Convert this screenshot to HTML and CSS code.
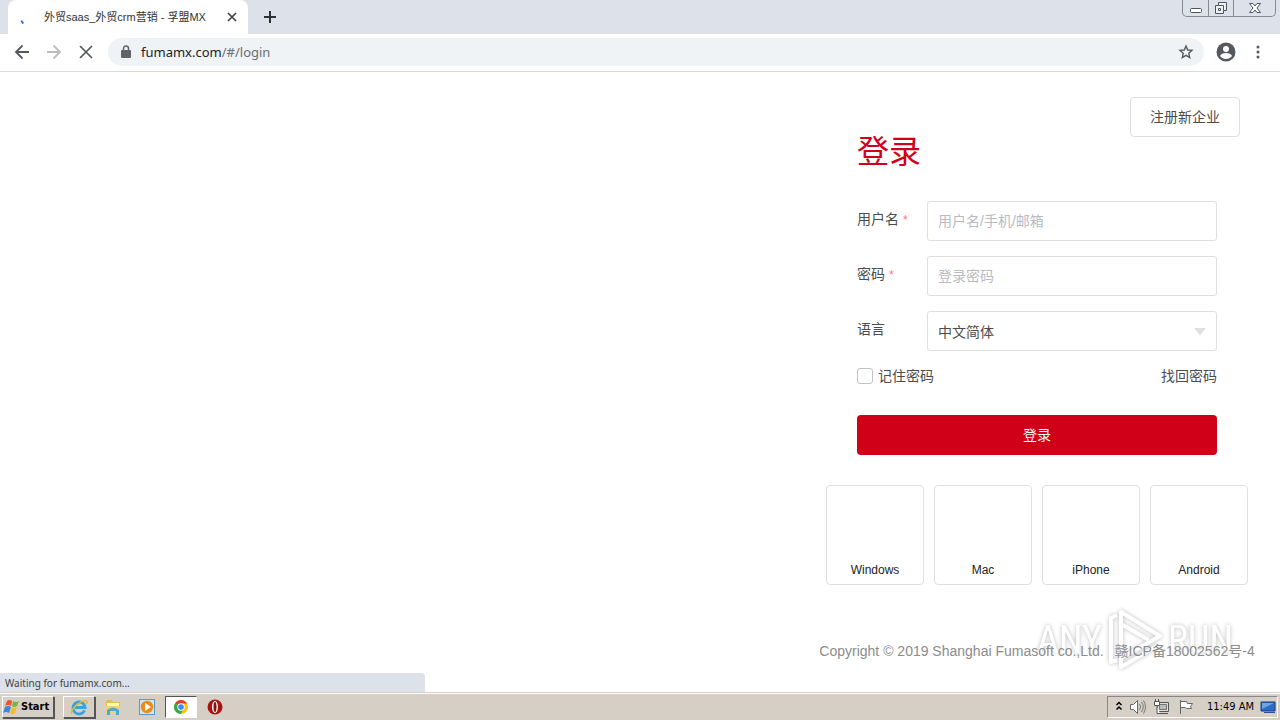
FILE: index.html
```html
<!DOCTYPE html>
<html lang="zh-CN">
<head>
<meta charset="utf-8">
<title>外贸saas_外贸crm营销 - 孚盟MX</title>
<link rel="stylesheet" href="styles.css">
</head>
<body>
<header class="tabstrip">
  <div class="tab">
    <svg class="spinner" width="16" height="16" viewBox="0 0 16 16"><path d="M5.500 6.500q.3 1.800 2 2.800" fill="none" stroke="#3b78d8" stroke-width="2"/></svg>
    <span class="tab-title">外贸saas_外贸crm营销 - 孚盟MX</span>
    <button class="icon-button tab-close" aria-label="Close tab"><svg width="10" height="10" viewBox="0 0 10 10"><path d="M1 1l8 8M9 1L1 9" stroke="#3c4043" stroke-width="1.600"/></svg></button>
  </div>
  <button class="icon-button new-tab" aria-label="New tab"><svg width="14" height="14" viewBox="0 0 14 14"><path d="M7 1v12M1 7h12" stroke="#2d3034" stroke-width="2"/></svg></button>
  <div class="window-controls">
    <button aria-label="Minimize"><svg width="14" height="14" viewBox="0 0 14 14"><rect x="1.500" y="7.500" width="11" height="4" rx="1" fill="#fff" stroke="#50545b"/></svg></button>
    <button aria-label="Restore"><svg width="14" height="14" viewBox="0 0 14 14"><path d="M4.500 1.500h8v8h-3v3h-8v-8h3z" fill="#eef0f3" stroke="#50545b"/><path d="M4.500 4.500h5v5M4.500 7.500h2v2h-2z" fill="none" stroke="#50545b"/></svg></button>
    <button aria-label="Close"><svg width="14" height="12" viewBox="0 0 14 12"><path d="M1.500 1.500h3.500l2 2.500 2-2.500h3.500L9 6l3.500 4.500H9L7 8l-2 2.500H1.500L5 6z" fill="#fff" stroke="#50545b"/></svg></button>
  </div>
</header>
<nav class="toolbar">
  <button class="icon-button" aria-label="Back"><svg width="16" height="16" viewBox="0 0 16 16"><path d="M15 8H2M8.500 1.500L2 8l6.500 6.500" fill="none" stroke="#55585c" stroke-width="1.800"/></svg></button>
  <button class="icon-button" aria-label="Forward"><svg width="16" height="16" viewBox="0 0 16 16"><path d="M1 8h13M7.500 1.500L14 8l-6.500 6.500" fill="none" stroke="#babcbe" stroke-width="1.800"/></svg></button>
  <button class="icon-button" aria-label="Stop"><svg width="16" height="16" viewBox="0 0 16 16"><path d="M2 2l12 12M14 2L2 14" stroke="#55585c" stroke-width="1.700"/></svg></button>
  <div class="omnibox">
    <svg width="10" height="14" viewBox="0 0 10 14"><path d="M2.500 6V3.500a2.500 2.500 0 015 0V6" fill="none" stroke="#5f6368" stroke-width="1.500"/><rect y="5" width="10" height="8" rx="1" fill="#5f6368"/></svg>
    <span class="url" role="textbox" aria-label="Address">fumamx.com<span class="url-path">/#/login</span></span>
    <button class="icon-button" aria-label="Bookmark"><svg width="16" height="16" viewBox="0 0 16 16"><path d="M8 2l1.700 4 4.300.4-3.200 2.900.9 4.200L8 11.300l-3.700 2.200.9-4.200L2 6.400 6.300 6z" fill="none" stroke="#55585c" stroke-width="1.400"/></svg></button>
  </div>
  <button class="icon-button profile" aria-label="Profile"><svg width="20" height="20" viewBox="0 0 20 20"><circle cx="10" cy="10" r="9.500" fill="#55585c"/><circle cx="10" cy="7" r="3" fill="#fff"/><path d="M4 14c1-4 11-4 12 0-3 4-9 4-12 0z" fill="#fff"/></svg></button>
  <button class="icon-button" aria-label="Menu"><svg width="4" height="14" viewBox="0 0 4 14" fill="#55585c"><circle cx="2" cy="2" r="1.500"/><circle cx="2" cy="7" r="1.500"/><circle cx="2" cy="12" r="1.500"/></svg></button>
</nav>
<main class="page">
  <div class="watermark">
    <span>ANY</span>
    <svg width="56" height="64" viewBox="0 0 56 64" fill="none" stroke="#fff" stroke-width="4" stroke-linejoin="round"><path d="M10 7L4 10v44l6-2"/><path d="M14 44V4l39 24-39 22v9l36-21"/><path d="M14 16l28 16"/></svg>
    <span>RUN</span>
  </div>
  <section class="panel">
    <button class="register">注册新企业</button>
    <form class="login">
      <h1>登录</h1>
      <div class="field">
        <label for="user">用户名 <span class="required">*</span></label>
        <input id="user" type="text" placeholder="用户名/手机/邮箱">
      </div>
      <div class="field">
        <label for="password">密码 <span class="required">*</span></label>
        <input id="password" type="password" placeholder="登录密码">
      </div>
      <div class="field">
        <label for="language">语言</label>
        <div class="select-box">
          <select id="language"><option>中文简体</option></select>
          <svg width="12" height="7" viewBox="0 0 12 7"><path d="M0 0h12L6 7z" fill="#dcdee0"/></svg>
        </div>
      </div>
      <div class="options">
        <label class="remember"><input type="checkbox">记住密码</label>
        <a href="#">找回密码</a>
      </div>
      <button class="submit" type="button">登录</button>
    </form>
    <div class="downloads">
      <a href="#">Windows</a>
      <a href="#">Mac</a>
      <a href="#">iPhone</a>
      <a href="#">Android</a>
    </div>
    <footer class="copyright"><span>Copyright © 2019 Shanghai Fumasoft co.,Ltd.</span><span>赣ICP备18002562号-4</span></footer>
  </section>
  <div class="status">Waiting for fumamx.com...</div>
</main>
<footer class="taskbar">
  <button class="start"><svg width="18" height="16" viewBox="0 0 18 16"><path d="M4 2q2-2 5 0L8 7q-3-2-6 0z" fill="#e8582c"/><path d="M10 2q3 2 6 0l-2 5q-3 2-5 0z" fill="#74b843"/><path d="M2 8q3-2 6 0l-2 6q-3-2-6 0z" fill="#3f86d8"/><path d="M9 8q2 2 5 0l-2 6q-3 2-5 0z" fill="#f4bd28"/></svg>Start</button>
  <button class="task raised" aria-label="Internet Explorer"><svg width="18" height="18" viewBox="0 0 18 18"><path d="M14.500 12.500A6 6 0 1115 9.500H5" fill="none" stroke="#38a3df" stroke-width="2.800"/><path d="M2 16C-1 12 12 1 16.500 3c1 .5.500 2 0 3" fill="none" stroke="#e8b735" stroke-width="1.500"/></svg></button>
  <button class="task" aria-label="Explorer"><svg width="18" height="18" viewBox="0 0 18 18"><path d="M2 4l1-2h5l1 2h7v11H2z" fill="#e3be50"/><path d="M3 5h12v4H3z" fill="#fff5bd"/><path d="M2 8h14v7H2z" fill="#f1d36c"/><path d="M3 17v-5q6-5 12 0v5h-3v-4H6v4z" fill="#48a9da"/></svg></button>
  <button class="task" aria-label="Media Player"><svg width="18" height="18" viewBox="0 0 18 18"><rect x="1.500" y="1.500" width="15" height="15" fill="#cce5f7" stroke="#529bd0"/><circle cx="9" cy="9" r="6.200" fill="#ef8a16"/><path d="M7 5l6 4-6 4z" fill="#fff"/></svg></button>
  <button class="task pressed" aria-label="Chrome"><svg width="16" height="16" viewBox="0 0 16 16"><circle cx="8" cy="8" r="7" fill="#fbc116"/><path d="M8 8L2 4.400A7 7 0 0114.100 4.600H8z" fill="#e33b2e"/><path d="M2 4.400A7 7 0 007.500 15L11 9.700 8 8z" fill="#2da94f"/><circle cx="8" cy="8" r="3.700" fill="#fff"/><circle cx="8" cy="8" r="2.800" fill="#4285f4"/></svg></button>
  <button class="task" aria-label="Opera"><svg width="16" height="16" viewBox="0 0 16 16"><circle cx="8" cy="8" r="7.500" fill="#a8140f"/><ellipse cx="8" cy="8" rx="3" ry="6" fill="#fff"/><ellipse cx="8" cy="8" rx="1.500" ry="5" fill="#8a120e"/></svg></button>
  <div class="tray">
    <svg width="8" height="12" viewBox="0 0 8 12"><path d="M1.500 4L4 1.500 6.500 4M1.500 8.500L4 6l2.500 2.500" fill="none" stroke="#000" stroke-width="1.500"/></svg>
    <svg width="18" height="16" viewBox="0 0 18 16"><path d="M1.500 5.500h3l4-4v13l-4-4h-3z" fill="#fff" stroke="#666"/><path d="M10.500 5q2 3 0 6M12.500 3q3.500 5 0 10M14.500 1.500q4 6.500 0 13" fill="none" stroke="#777"/></svg>
    <svg width="18" height="16" viewBox="0 0 18 16"><path d="M4.500 3.500h11v9h-11zM7 14.500h8" fill="#ddd" stroke="#555"/><path d="M6.500 5.500h7v5h-7z" fill="#bbb" stroke="#777"/><path d="M1.500 2.500h5v4h-5zM2.500 0v2M5.500 0v2M4 7v7.500h3" fill="#fff" stroke="#555"/></svg>
    <svg width="18" height="16" viewBox="0 0 18 16"><path d="M3.500 1v14M3.500 2.500h6l1 2h5l-2 3 1 2h-5l-1-1h-5z" fill="#fff" stroke="#666"/></svg>
    <time>11:49 AM</time>
    <svg width="16" height="14" viewBox="0 0 16 14"><path d="M1 2h14v9H1z" fill="#2b6bc5" stroke="#173d7b"/><path d="M2 3h12L2 9z" fill="#6ba5e8"/><path d="M4 12.500h11" stroke="#29528f"/></svg>
  </div>
</footer>
</body>
</html>
```
FILE: styles.css
```css
* { box-sizing: border-box; }
body {
  margin: 0;
  min-height: 100vh;
  display: flex;
  flex-direction: column;
  background: #fff;
  color: #4c4c4c;
  font: 14px/20px "Liberation Sans", "Noto Sans CJK SC", sans-serif;
}
button, input, select { font: inherit; color: inherit; }
button { padding: 0; border: 0; background: none; }
a { color: inherit; text-decoration: none; }
svg { display: block; flex: none; }
.icon-button { display: flex; }

.tabstrip { display: flex; height: 34px; padding-left: 8px; background: #dde1e9; }
.tab {
  display: flex;
  align-items: center;
  width: 240px;
  padding: 0 11px 0 8px;
  background: #fff;
  border-radius: 8px 8px 0 0;
}
.spinner { margin: 10px 12px 0 0; }
.tab-title {
  flex: 1;
  white-space: nowrap;
  color: #333;
  font: 11px/16px "Liberation Sans", "Noto Sans CJK SC", sans-serif;
}
.new-tab { align-self: center; margin-left: 15px; }
.window-controls {
  display: flex;
  height: 17px;
  margin: 0 4px 0 auto;
  border: 1px solid #858a93;
  border-top: 0;
  border-radius: 0 0 5px 5px;
}
.window-controls button { display: flex; align-items: center; justify-content: center; width: 25px; }
.window-controls button + button { border-left: 1px solid #858a93; }
.window-controls button:last-child { width: 42px; }

.toolbar {
  display: flex;
  align-items: center;
  gap: 16px;
  height: 38px;
  padding: 0 20px 2px 14px;
  border-bottom: 1px solid #d8dadd;
}
.omnibox {
  display: flex;
  flex: 1;
  align-items: center;
  gap: 10px;
  height: 28px;
  margin-left: -2px;
  padding: 0 10px 0 13px;
  border-radius: 14px;
  background: #f0f3f6;
}
.url { flex: 1; color: #202124; font: 13px/20px "Noto Sans", sans-serif; }
.url-path { color: #6a6e73; }
.profile { margin: 0 4px 0 -4px; }

.page { position: relative; display: flex; flex: 1; justify-content: flex-end; }
.panel { position: relative; display: flex; flex-direction: column; align-items: center; width: 486px; padding-top: 25px; }
.register {
  align-self: flex-end;
  width: 110px;
  height: 40px;
  margin-right: 40px;
  border: 1px solid #dedfe2;
  border-radius: 4px;
}
.login { display: flex; flex-direction: column; gap: 15px; width: 360px; }
h1 { margin: -10px 0 9px; color: #d0021b; font-size: 32px; line-height: 50px; font-weight: 400; }
.field { display: flex; height: 40px; }
.field > label { width: 70px; line-height: 36px; }
.required { color: #ff7185; font-size: 12px; }
.field input, .select-box { flex: 1; min-width: 0; border: 1px solid #dedfe2; border-radius: 3px; background: #fff; }
.field input { padding: 0 10px; }
.field input::placeholder { color: #b8bac4; opacity: 1; }
.select-box { display: flex; align-items: center; padding-right: 10px; }
.select-box select { flex: 1; height: 38px; padding: 2px 10px 0; border: 0; background: none; appearance: none; }
.options { display: flex; justify-content: space-between; line-height: 20px; }
.remember { display: flex; align-items: center; gap: 5px; }
.remember input { appearance: none; width: 16px; height: 16px; margin: 0; border: 1px solid #bfc1c4; border-radius: 3px; background: #fff; }
.submit { height: 40px; margin-top: 14px; border-radius: 4px; background: #d00018; color: #fff; }
.downloads { display: flex; gap: 10px; margin-top: 30px; }
.downloads a {
  display: flex;
  align-items: flex-end;
  justify-content: center;
  width: 98px;
  height: 100px;
  padding-bottom: 4px;
  border: 1px solid #dedfe2;
  border-radius: 4px;
  color: #222;
  font-size: 12px;
}
.copyright { display: flex; gap: 11px; margin-top: 56px; color: #8c8c8c; white-space: nowrap; }
.watermark {
  position: absolute;
  right: 47px;
  bottom: 20px;
  display: flex;
  align-items: center;
  gap: 5px;
  color: #fff;
  opacity: .8;
  font: 38px/60px "Liberation Sans Narrow", "Roboto Condensed", Roboto, sans-serif;
  filter: drop-shadow(0 0 2px #aaa);
  pointer-events: none;
}
.status {
  position: absolute;
  left: 0;
  bottom: 0;
  width: 425px;
  padding: 2px 5px 1px;
  border-radius: 0 4px 0 0;
  background: #dde1e9;
  color: #3c4043;
  font: 10px/16px "Noto Sans", sans-serif;
}
.taskbar {
  display: flex;
  align-items: center;
  gap: 2px;
  height: 28px;
  padding: 1px 2px 0;
  border-top: 1px solid #d5d1c9;
  background: #d5cfc6;
  box-shadow: inset 0 1px #fff;
  color: #000;
}
.start, .raised { border: 1px solid #fff; border-right-color: #555; border-bottom-color: #555; box-shadow: 1px 1px #555; }
.start {
  display: flex;
  align-items: center;
  width: 52px;
  height: 22px;
  margin-right: 7px;
  font: bold 11px/16px "DejaVu Sans Condensed", "DejaVu Sans", sans-serif;
}
.task { display: flex; align-items: center; justify-content: center; width: 32px; height: 22px; }
.pressed { border: 1px solid #555; border-right-color: #fff; border-bottom-color: #fff; background: #fff; }
.tray {
  display: flex;
  align-items: center;
  gap: 6px;
  height: 22px;
  margin-left: auto;
  padding: 0 1px 0 7px;
  border: 1px solid #888;
  border-right-color: #fff;
  border-bottom-color: #fff;
}
.tray time { margin-left: 6px; font: 11px/16px "DejaVu Sans Condensed", "DejaVu Sans", sans-serif; }
```
